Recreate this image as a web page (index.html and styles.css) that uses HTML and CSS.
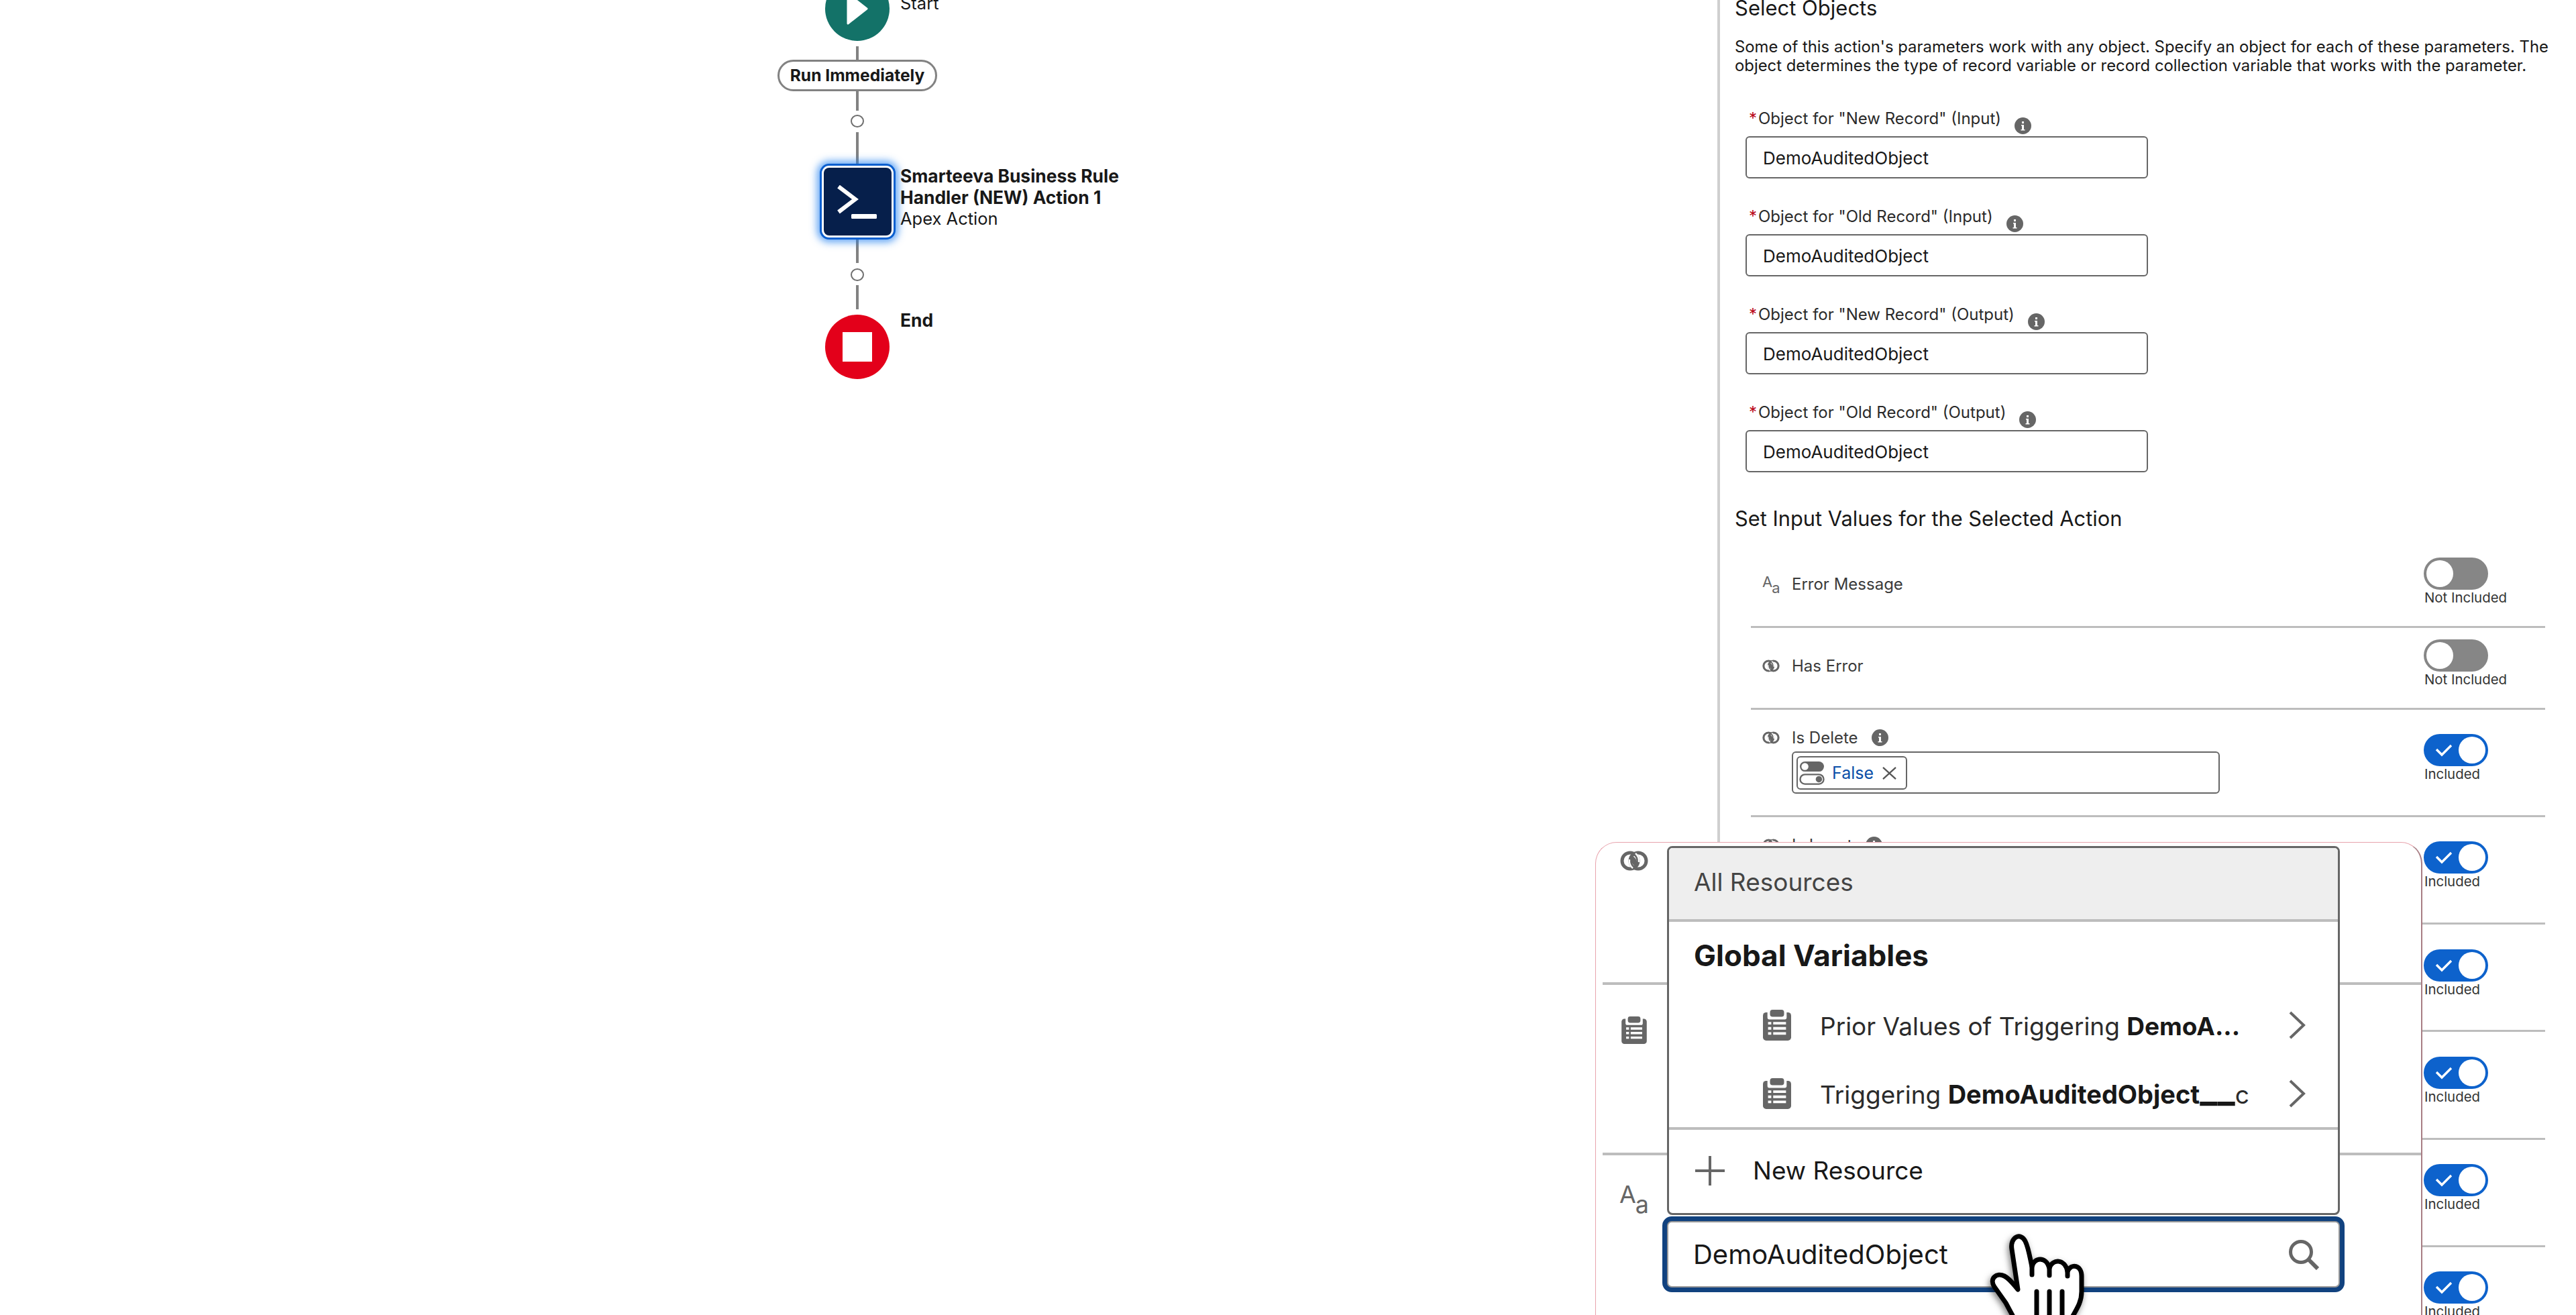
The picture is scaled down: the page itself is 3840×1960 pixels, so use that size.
FILE: index.html
```html
<!DOCTYPE html>
<html lang="en">
<head>
  <meta charset="UTF-8" />
  <title>Flow Builder</title>
  <link rel="stylesheet" href="styles.css">
</head>
<body>
  <svg class="defs" width="0" height="0">
    <defs>
      <symbol id="i-link" viewBox="0 0 42 30">
        <circle cx="15" cy="15" r="12" fill="none" stroke="#666" stroke-width="5"/>
        <circle cx="27" cy="15" r="12" fill="none" stroke="#666" stroke-width="5"/>
        <path d="M17 7C24 10 27 17 25 24C18 22 14 14 17 7z" fill="#666"/>
        <path d="M23 4Q29 9 28 17" fill="none" stroke="#fff" stroke-width="2.4"/>
        <path d="M19 26Q13 21 14 13" fill="none" stroke="#fff" stroke-width="2.4"/>
      </symbol>
      <symbol id="i-clip" viewBox="0 0 44 48">
        <rect x="0" y="4" width="44" height="44" rx="5" fill="#666"/>
        <rect x="7" y="0" width="30" height="15" rx="3" fill="#fff"/>
        <rect x="11" y="0" width="22" height="11" rx="4" fill="#666"/>
        <path d="M8 21h5M16 21h20M8 29h5M16 29h20M8 37h5M16 37h20" stroke="#fff" stroke-width="4"/>
      </symbol>
      <symbol id="i-info" viewBox="0 0 25 25">
        <circle cx="12.5" cy="12.5" r="12.5" fill="#666"/>
        <path d="M10 11h4v7h1.5v1.5h-6V18H11v-5.5h-1zM11 6h3v3h-3z" fill="#fff"/>
      </symbol>
      <symbol id="i-check" viewBox="0 0 26 20">
        <path d="M2 9l8 8L24 3" fill="none" stroke="#fff" stroke-width="3.4"/>
      </symbol>
    </defs>
  </svg>

  <div class="app">
    <main class="canvas">
      <div class="flow">
        <div class="node node-start">
          <div class="disc disc-start">
            <svg width="34" height="50" viewBox="0 0 34 50"><path d="M3 3L31 25L3 47z" fill="#fff" stroke="#fff" stroke-width="3" stroke-linejoin="round"/></svg>
          </div>
          <div class="node-label"><span class="thin">Start</span></div>
        </div>
        <div class="line l-20"></div>
        <div class="pill">Run Immediately</div>
        <div class="line l-29"></div>
        <div class="dot"></div>
        <div class="line l-47"></div>
        <div class="node node-action">
          <div class="action-box">
            <div class="action-inner">
              <svg width="60" height="50" viewBox="0 0 60 50"><path d="M2 2L27 21L2 40" fill="none" stroke="#fff" stroke-width="6"/><rect x="21" y="43" width="38" height="7" rx="1.5" fill="#fff"/></svg>
            </div>
          </div>
          <div class="node-label">
            <strong>Smarteeva Business Rule<br>Handler (NEW) Action 1</strong>
            <span class="thin">Apex Action</span>
          </div>
        </div>
        <div class="line l-35"></div>
        <div class="dot dot-low"></div>
        <div class="line l-36"></div>
        <div class="node node-end">
          <div class="disc disc-end"><span class="stop"></span></div>
          <div class="node-label"><strong>End</strong></div>
        </div>
      </div>
    </main>

    <aside class="panel">
      <h2 class="panel-title">Select Objects</h2>
      <p class="panel-help">Some of this action's parameters work with any object. Specify an object for each of these parameters. The<br>object determines the type of record variable or record collection variable that works with the parameter.</p>

      <div class="objects">
        <div class="obj-field">
          <label><span class="req">*</span>Object for "New Record" (Input)<svg class="info"><use href="#i-info"/></svg></label>
          <div class="text-input">DemoAuditedObject</div>
        </div>
        <div class="obj-field">
          <label><span class="req">*</span>Object for "Old Record" (Input)<svg class="info"><use href="#i-info"/></svg></label>
          <div class="text-input">DemoAuditedObject</div>
        </div>
        <div class="obj-field">
          <label><span class="req">*</span>Object for "New Record" (Output)<svg class="info"><use href="#i-info"/></svg></label>
          <div class="text-input">DemoAuditedObject</div>
        </div>
        <div class="obj-field">
          <label><span class="req">*</span>Object for "Old Record" (Output)<svg class="info"><use href="#i-info"/></svg></label>
          <div class="text-input">DemoAuditedObject</div>
        </div>
      </div>

      <h2 class="panel-title section-two">Set Input Values for the Selected Action</h2>

      <div class="params">
        <div class="param param-off">
          <div class="param-main"><span class="aa">A<sub>a</sub></span><span>Error Message</span></div>
          <div class="toggle-wrap"><span class="toggle off"><i></i></span><small>Not Included</small></div>
        </div>
        <div class="param param-off">
          <div class="param-main"><svg class="link-ico"><use href="#i-link"/></svg><span>Has Error</span></div>
          <div class="toggle-wrap"><span class="toggle off"><i></i></span><small>Not Included</small></div>
        </div>
        <div class="param">
          <div class="param-col">
            <div class="param-main"><svg class="link-ico"><use href="#i-link"/></svg><span>Is Delete</span><svg class="info"><use href="#i-info"/></svg></div>
            <div class="tag-input">
              <span class="tag">
                <svg class="bool" viewBox="0 0 40 38"><rect x="1" y="1" width="38" height="16" rx="8" fill="#666"/><circle cx="9" cy="9" r="5.5" fill="#fff"/><rect x="1.5" y="21.5" width="37" height="15" rx="7.5" fill="#fff" stroke="#666" stroke-width="2.5"/><circle cx="31" cy="29" r="5" fill="#666"/></svg>
                <span class="tag-text">False</span>
                <svg class="tag-x" viewBox="0 0 22 20"><path d="M1 1L21 19M21 1L1 19" stroke="#555" stroke-width="2.4"/></svg>
              </span>
            </div>
          </div>
          <div class="toggle-wrap"><span class="toggle on"><svg width="26" height="20"><use href="#i-check"/></svg><i></i></span><small>Included</small></div>
        </div>
        <div class="param">
          <div class="param-main"><svg class="link-ico"><use href="#i-link"/></svg><span>Is Insert</span><svg class="info"><use href="#i-info"/></svg></div>
          <div class="toggle-wrap"><span class="toggle on"><svg width="26" height="20"><use href="#i-check"/></svg><i></i></span><small>Included</small></div>
        </div>
        <div class="param">
          <div class="param-main"></div>
          <div class="toggle-wrap"><span class="toggle on"><svg width="26" height="20"><use href="#i-check"/></svg><i></i></span><small>Included</small></div>
        </div>
        <div class="param">
          <div class="param-main"></div>
          <div class="toggle-wrap"><span class="toggle on"><svg width="26" height="20"><use href="#i-check"/></svg><i></i></span><small>Included</small></div>
        </div>
        <div class="param">
          <div class="param-main"></div>
          <div class="toggle-wrap"><span class="toggle on"><svg width="26" height="20"><use href="#i-check"/></svg><i></i></span><small>Included</small></div>
        </div>
        <div class="param">
          <div class="param-main"></div>
          <div class="toggle-wrap"><span class="toggle on"><svg width="26" height="20"><use href="#i-check"/></svg><i></i></span><small>Included</small></div>
        </div>
      </div>
    </aside>
  </div>

  <!-- zoomed callout over the panel -->
  <section class="callout">
    <div class="callout-rows">
      <div class="callout-row"><svg class="big-link"><use href="#i-link"/></svg></div>
      <div class="callout-row"><svg class="big-clip"><use href="#i-clip"/></svg></div>
      <div class="callout-row last"><span class="aa big">A<sub>a</sub></span></div>
    </div>

    <div class="combo">
      <div class="menu">
        <div class="menu-head">All Resources</div>
        <div class="menu-group">Global Variables</div>
        <div class="menu-item">
          <svg class="item-ico"><use href="#i-clip"/></svg>
          <span class="item-text">Prior Values of Triggering <b>DemoA...</b></span>
          <svg class="chev" viewBox="0 0 26 42"><path d="M3 2L23 21L3 40" fill="none" stroke="#666" stroke-width="4"/></svg>
        </div>
        <div class="menu-item">
          <svg class="item-ico"><use href="#i-clip"/></svg>
          <span class="item-text">Triggering <b class="api-name">DemoAuditedObject<span class="us">__</span></b>c</span>
          <svg class="chev" viewBox="0 0 26 42"><path d="M3 2L23 21L3 40" fill="none" stroke="#666" stroke-width="4"/></svg>
        </div>
        <div class="menu-new">
          <svg class="plus" viewBox="0 0 44 44"><path d="M22 0V44M0 22H44" stroke="#666" stroke-width="4"/></svg>
          <span>New Resource</span>
        </div>
      </div>
      <div class="search-box">
        <span>DemoAuditedObject</span>
        <svg class="search-ico" viewBox="0 0 46 46"><circle cx="19" cy="19" r="15.5" fill="none" stroke="#666" stroke-width="5"/><path d="M30 30L44 44" stroke="#666" stroke-width="6"/></svg>
      </div>
    </div>
  </section>

  <svg class="cursor" viewBox="0 0 160 150" width="160" height="150">
    <path class="hand" d="M45 140L30 112L13 88C5 76 16 66 28 72C36 76 42 85 48 92L39 32C36 14 52 6 59 20C64 30 66 45 69 58C72 44 90 42 95 60C100 46 118 46 122 65C128 52 143 56 143 72L143 95C143 112 135 122 125 140Z"/>
    <path class="hand-lines" d="M69 58V70M95 60V71M122 65V72M76 95V140M95 95V140M114 95V140"/>
  </svg>
</body>
</html>
```

FILE: styles.css
```css
* { box-sizing: border-box; }
html, body {
  margin: 0;
  width: 3840px;
  height: 1960px;
  overflow: hidden;
  background: #fff;
}
body {
  position: relative;
  font-family: Inter, "Noto Sans", sans-serif;
  color: #181818;
}
.defs { position: absolute; }
.app {
  display: flex;
  height: 1960px;
}

/* flow canvas */
.canvas {
  width: 2560px;
  flex: none;
  padding-left: 1159px;
}
.flow {
  width: 238px;
  margin-top: -35px;
  display: flex;
  flex-direction: column;
  align-items: center;
}
.line {
  width: 4px;
  background: #828282;
  flex: none;
}
.l-20 { height: 20px; margin-top: 8px; }
.l-29 { height: 29px; }
.l-47 { height: 47px; margin-top: 7px; }
.l-35 { height: 35px; }
.l-36 { height: 36px; margin-top: 6px; }
.pill {
  width: 238px;
  height: 47px;
  border: 3px solid #828282;
  border-radius: 24px;
  font-size: 24.6px;
  font-weight: 700;
  line-height: 41px;
  text-align: center;
  white-space: nowrap;
}
.dot {
  width: 20px;
  height: 19px;
  margin-top: 6px;
  border: 2px solid #6f6f6f;
  border-radius: 50%;
  flex: none;
}
.dot-low { margin-top: 8px; }
.node {
  position: relative;
  flex: none;
  display: flex;
  justify-content: center;
}
.node-label {
  position: absolute;
  left: calc(50% + 64px);
  white-space: nowrap;
  font-size: 25.5px;
  line-height: 32px;
}
.node-label strong, .node-label .thin { display: block; }
.node-label strong { font-size: 26.4px; font-weight: 700; }
.node-start .node-label { top: 24px; }
.node-action .node-label { top: 2px; }
.node-end .node-label { top: 0; }
.disc {
  width: 96px;
  height: 96px;
  border-radius: 50%;
  display: flex;
  align-items: center;
  justify-content: center;
}
.disc-start { background: #137268; }
.disc-end { background: #e3001a; margin-top: 8px; }
.stop { width: 44px; height: 44px; background: #fff; }
.action-box {
  width: 113px;
  height: 113px;
  padding: 3px;
  background: #fff;
  border: 3px solid #0b5fcf;
  border-radius: 14px;
  box-shadow: 0 0 12px 4px rgba(28, 125, 240, .7);
}
.action-inner {
  width: 100%;
  height: 100%;
  background: #061f4b;
  border-radius: 8px;
  display: flex;
  align-items: center;
  justify-content: center;
}

/* right panel */
.panel {
  flex: 1;
  min-width: 0;
  border-left: 4px solid #cfcfcf;
  padding-left: 22px;
}
.panel-title {
  margin: 0;
  font-size: 31px;
  font-weight: 400;
  line-height: 24px;
}
.panel-help {
  margin: 32px 0 0;
  font-size: 23.85px;
  line-height: 27.5px;
  white-space: nowrap;
}
.objects {
  padding-left: 16px;
  margin-top: 38px;
}
.obj-field {
  width: 600px;
  height: 146px;
}
.obj-field label {
  display: flex;
  align-items: flex-start;
  height: 54px;
  padding: 14px 0 0 5px;
  font-size: 24px;
  line-height: 28px;
  white-space: nowrap;
  color: #2a2a2a;
}
.req { color: #ba0517; width: 14px; }
.obj-field .info { margin: 12px 0 0 20px; }
.info { width: 25px; height: 25px; flex: none; }
.text-input {
  height: 63px;
  border: 2.5px solid #666;
  border-radius: 6px;
  padding-left: 24px;
  font-size: 26px;
  line-height: 61px;
  white-space: nowrap;
}
.section-two { margin-top: 20px; font-size: 30.8px; line-height: 40px; }
.params {
  margin: 21.5px 46px 0 24px;
}
.param {
  height: 160.25px;
  border-bottom: 3px solid #bdbdbd;
  display: flex;
  justify-content: space-between;
  padding: 28px 0 0 17px;
  font-size: 24px;
  color: #3a3a3a;
}
.param-off { height: 121.5px; padding-top: 42px; }
.param-main {
  display: flex;
  align-items: center;
  gap: 18px;
  height: 28px;
}
.param-main .info { margin-left: 2px; }
.aa {
  font-size: 22px;
  color: #666;
  width: 26px;
  line-height: 1;
  white-space: nowrap;
  transform: translateY(-4px);
}
.aa sub { font-size: 22px; vertical-align: -9px; line-height: 0; margin-left: -1px; }
.link-ico { width: 26px; height: 19px; flex: none; }
.tag-input {
  width: 638px;
  height: 63px;
  margin: 6.5px 0 0 44px;
  padding: 5px;
  border: 2.5px solid #666;
  border-radius: 6px;
}
.tag {
  display: inline-flex;
  align-items: center;
  width: 165px;
  height: 50px;
  border: 2.5px solid #666;
  border-radius: 6px;
  padding-left: 2px;
}
.bool { width: 38px; height: 36px; flex: none; }
.tag-text { margin-left: 11px; color: #0b4fa8; font-size: 25px; }
.tag-x { width: 21px; height: 19px; margin-left: 13px; flex: none; }
.toggle-wrap {
  width: 181px;
  flex: none;
  display: flex;
  flex-direction: column;
  align-items: flex-start;
  margin-top: 8.5px;
}
.param-off .toggle-wrap { margin-top: -25.5px; }
.toggle {
  position: relative;
  width: 96px;
  height: 48px;
  border-radius: 24px;
  display: block;
}
.toggle i {
  position: absolute;
  top: 4px;
  width: 40px;
  height: 40px;
  border-radius: 50%;
  background: #fff;
}
.toggle.off { background: #868686; }
.toggle.off i { left: 4px; }
.toggle.on { background: #0d62cc; }
.toggle.on i { right: 4px; }
.toggle.on svg { position: absolute; left: 17px; top: 14px; }
.toggle-wrap small {
  display: block;
  margin-left: 1px;
  font-size: 20.4px;
  line-height: 24px;
  color: #333;
  white-space: nowrap;
}

/* callout */
.callout {
  position: absolute;
  left: 2378px;
  top: 1255px;
  width: 1233px;
  height: 705px;
  background: #fff;
  border: 1px solid #e8a3ad;
  border-right: 2px solid #a87d84;
  border-bottom: 0;
  border-radius: 32px 32px 0 0;
}
.callout-rows { padding: 0 0 0 10px; }
.callout-row {
  height: 254px;
  border-bottom: 4px solid #bdbdbd;
  padding: 12px 0 0 25px;
}
.callout-row:first-child { height: 212px; }
.callout-row:nth-child(2) { padding-top: 47px; }
.callout-row.last { border: 0; padding-top: 40px; }
.big-link { width: 44px; height: 30px; }
.big-clip { width: 38px; height: 41px; margin-left: 3px; }
.aa.big { display: inline-block; font-size: 36px; transform: none; }
.aa.big sub { font-size: 36px; vertical-align: -15px; }
.combo {
  position: absolute;
  left: 99px;
  top: 5px;
  width: 1017px;
}
.menu {
  margin: 0 7px;
  height: 550px;
  background: #fff;
  border: 3px solid #666;
  border-radius: 8px;
  overflow: hidden;
}
.menu-head {
  height: 110px;
  padding-left: 37px;
  background: #eee;
  border-bottom: 4px solid #bdbdbd;
  font-size: 37px;
  line-height: 102px;
  color: #444;
}
.menu-group {
  padding-left: 37px;
  font-size: 44px;
  font-weight: 700;
  line-height: 48px;
  margin: 26px 0 29px;
}
.menu-item {
  height: 102px;
  display: flex;
  align-items: center;
  padding-left: 140px;
  font-size: 37px;
}
.item-ico { width: 42px; height: 46px; flex: none; }
.item-text { margin: 2px 0 0 43px; width: 698px; white-space: nowrap; color: #2b2b2b; }
.item-text b { font-weight: 700; color: #181818; }
.item-text .api-name { font-size: 38px; }
.us { font-size: 1.45em; line-height: 0; vertical-align: .06em; }
.chev { width: 26px; height: 42px; flex: none; }
.menu-new {
  border-top: 4px solid #bdbdbd;
  margin-top: -1px;
  height: 125px;
  display: flex;
  align-items: center;
  padding: 0 0 0 39px;
  font-size: 37px;
  gap: 42px;
}
.plus { width: 44px; height: 44px; flex: none; }
.search-box {
  margin-top: 2px;
  height: 113px;
  background: #fff;
  border: 8px solid #11427f;
  border-radius: 14px;
  outline: 2px solid #999;
  outline-offset: -9px;
  display: flex;
  align-items: center;
  justify-content: space-between;
  padding: 0 30px 0 38px;
  font-size: 40px;
}
.search-ico { width: 46px; height: 46px; }

/* hand cursor */
.cursor {
  position: absolute;
  left: 2960px;
  top: 1830px;
  overflow: visible;
  filter: drop-shadow(-2px 4px 5px rgba(0, 0, 0, .5));
}
.hand { fill: #fff; stroke: #000; stroke-width: 7; stroke-linejoin: round; }
.hand-lines { fill: none; stroke: #000; stroke-width: 7; stroke-linecap: round; }
```
